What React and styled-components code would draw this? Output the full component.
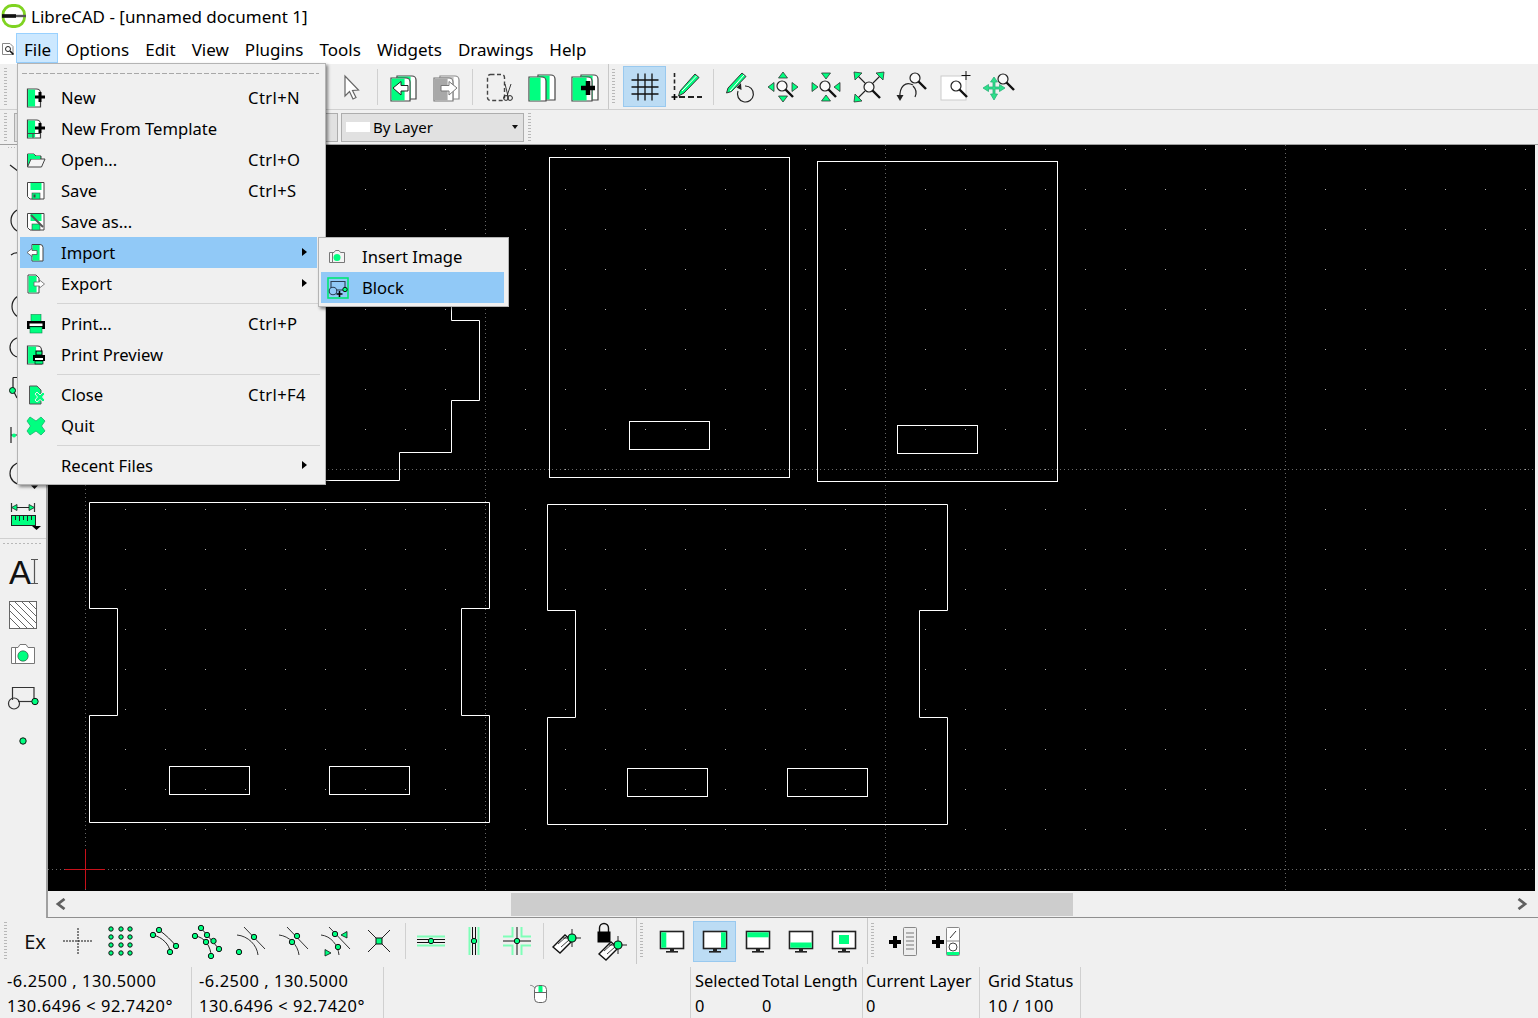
import React from "react";
import styled, { createGlobalStyle } from "styled-components";

const G = "#00ff80";
const K = "#111";
const FONT = `"Noto Sans", "Open Sans", sans-serif`;

const Global = createGlobalStyle`
  html, body { margin: 0; padding: 0; background: #f0f0f0; }
  body { font-family: ${FONT}; color: #000; }
`;

const Window = styled.div`
  position: relative;
  width: 1538px;
  height: 1018px;
  overflow: hidden;
  display: flex;
  flex-direction: column;
  background: #f0f0f0;
`;

const TitleBar = styled.div`
  height: 32px;
  display: flex;
  align-items: center;
  background: #fff;
  font-size: 17px;
`;

const TitleText = styled.span`
  margin-left: 4px;
`;

const MenuBar = styled.div`
  height: 32px;
  display: flex;
  align-items: center;
  background: #fff;
  font-size: 17px;
`;

const SysIcon = styled.svg`
  width: 14px;
  height: 14px;
  margin: 2px 1px 0 1px;
  flex: none;
`;

const MenuTitle = styled.div`
  height: 28px;
  padding: 0 ${(p) => (p.$open ? 7 : 8)}px;
  width: ${(p) => (p.$open ? "26px" : "auto")};
  line-height: 32px;
  border: 1px solid ${(p) => (p.$open ? "#99d1ff" : "transparent")};
  background: ${(p) => (p.$open ? "#cce8ff" : "transparent")};
  margin-left: ${(p) => (p.$open ? "0" : "-1px")};
  margin-right: ${(p) => (p.$open ? "0" : "-1px")};
`;

const Toolbar = styled.div`
  height: ${(p) => p.$h}px;
  display: flex;
  align-items: center;
  border-bottom: 1px solid ${(p) => p.$line};
  flex: none;
`;

const Grip = styled.div`
  width: 3px;
  height: ${(p) => p.$h || 38}px;
  margin-left: ${(p) => p.$ml ?? 4}px;
  flex: none;
  background: repeating-linear-gradient(to bottom, #b8b8b8 0 1px, transparent 1px 3px);
`;

const Spacer = styled.div`
  width: ${(p) => p.$w}px;
  flex: none;
`;

const ToolBtn = styled.div`
  width: 43px;
  height: 41px;
  flex: none;
  box-sizing: border-box;
  display: flex;
  align-items: center;
  justify-content: center;
  border: 1px solid ${(p) => (p.$on ? "#99c9ef" : "transparent")};
  background: ${(p) => (p.$on ? "#bcdcf4" : "transparent")};
`;

const Ex = styled.span`
  font-size: 20px;
  color: #111;
`;

const Glyph = styled.svg`
  width: 32px;
  height: 32px;
  overflow: visible;
  flex: none;
`;

const SideGlyph = styled(Glyph)`
  width: 30px;
  height: 30px;
`;

const ToolSep = styled.div`
  width: 9px;
  height: 36px;
  flex: none;
  &::before {
    content: "";
    display: block;
    width: 1px;
    height: 100%;
    margin-left: 4px;
    background: #d0d0d0;
  }
`;

const BreakBox = styled.div`
  width: ${(p) => p.$w}px;
  height: 100%;
  flex: none;
  display: flex;
  align-items: center;
  gap: 3px;
  padding-left: 2px;
  box-sizing: border-box;
`;

const BreakLine = styled.div`
  width: 1px;
  height: 100%;
  background: #c8c8c8;
  flex: none;
`;

const ComboLeft = styled.div`
  width: 324px;
  height: 29px;
  margin-left: 7px;
  box-sizing: border-box;
  border: 1px solid #adadad;
  background: #e1e1e1;
  flex: none;
`;

const Combo = styled.div`
  width: 183px;
  height: 29px;
  margin-left: 3px;
  box-sizing: border-box;
  border: 1px solid #adadad;
  background: #e1e1e1;
  display: flex;
  align-items: center;
  padding-left: 4px;
  font-size: 15px;
  line-height: 31px;
  flex: none;
`;

const Swatch = styled.div`
  width: 24px;
  height: 10px;
  background: #fff;
  margin-right: 3px;
  flex: none;
`;

const ComboArrow = styled.div`
  margin-left: auto;
  margin-right: 5px;
  width: 0;
  height: 0;
  border-left: 3.5px solid transparent;
  border-right: 3.5px solid transparent;
  border-top: 4px solid #111;
`;

const Middle = styled.div`
  flex: 1;
  display: flex;
  min-height: 0;
`;

const SideBar = styled.div`
  width: 46px;
  flex: none;
  display: flex;
  flex-direction: column;
  align-items: center;
`;

const SideGrip = styled.div`
  width: 30px;
  height: 5px;
  flex: none;
  background: repeating-linear-gradient(to right, #b8b8b8 0 1px, transparent 1px 3px);
  background-position: 0 2px;
  background-size: 100% 1px;
  background-repeat: no-repeat;
`;

const SideBtn = styled.div`
  width: 46px;
  height: 43px;
  flex: none;
  display: flex;
  align-items: center;
  justify-content: center;
  margin-top: ${(p) => p.$up || 0}px;
`;

const SideBreak = styled.div`
  width: 46px;
  height: 12px;
  flex: none;
  border-top: 1px solid #d0d0d0;
  margin-top: 1px;
  box-sizing: border-box;
  &::after {
    content: "";
    display: block;
    height: 1px;
    margin: 4px 3px 0 3px;
    background: repeating-linear-gradient(to right, #b8b8b8 0 2px, transparent 2px 4px);
  }
`;

const Work = styled.div`
  flex: 1;
  display: flex;
  flex-direction: column;
  border-left: 2px solid #a0a0a0;
  border-bottom: 1px solid #8f8f8f;
  min-width: 0;
`;

const CanvasWrap = styled.div`
  height: 746px;
  padding-right: 3px;
  flex: none;
`;

const Canvas = styled.svg`
  display: block;
  width: 1487px;
  height: 746px;
  background: #000;
`;

const ScrollBar = styled.div`
  flex: 1;
  display: flex;
  align-items: center;
  padding-right: 4px;
`;

const ScrollArrow = styled.svg`
  width: 26px;
  height: 12px;
  flex: none;
`;

const ScrollTrack = styled.div`
  flex: 1;
  height: 23px;
`;

const ScrollThumb = styled.div`
  width: 562px;
  height: 23px;
  margin-left: 437px;
  background: #cdcdcd;
`;

const StatusBar = styled.div`
  height: 53px;
  flex: none;
  display: flex;
  align-items: stretch;
  font-size: 16.4px;
`;

const Cell = styled.div`
  width: ${(p) => p.$w}px;
  margin-top: 2px;
  box-sizing: border-box;
  padding-left: ${(p) => p.$pl}px;
  border-right: 1px solid #d0d0d0;
  flex: none;
  display: flex;
  justify-content: ${(p) => (p.$center ? "center" : "flex-start")};
  align-items: ${(p) => (p.$center ? "center" : "stretch")};
`;

const Lines = styled.div`
  width: ${(p) => (p.$w ? p.$w + "px" : "auto")};
  flex: none;
  line-height: 25px;
  padding-top: 1px;
  white-space: nowrap;
`;

const Value = styled.span`
  letter-spacing: 0.55px;
`;

const MouseIcon = styled.svg`
  width: 20px;
  height: 22px;
  margin-left: 6px;
`;

const Menu = styled.div`
  position: absolute;
  left: ${(p) => p.$x}px;
  top: ${(p) => p.$y}px;
  width: ${(p) => p.$w}px;
  height: ${(p) => p.$h}px;
  box-sizing: border-box;
  background: #f0f0f0;
  border: 1px solid #b4b4b4;
  padding-left: 2px;
  box-shadow: 2px 2px 3px rgba(0, 0, 0, 0.45);
  font-size: 16.6px;
`;

const TearOff = styled.div`
  height: 18px;
  box-sizing: border-box;
  padding: 9px 6px 0 2px;
  &::before {
    content: "";
    display: block;
    height: 1px;
    background: repeating-linear-gradient(to right, #a8a8a8 0 5px, transparent 5px 7px);
  }
`;

const Item = styled.div`
  width: ${(p) => p.$w}px;
  height: 31px;
  display: grid;
  grid-template-columns: 41px ${(p) => (p.$sub ? "1fr" : "187px 1fr 20px")};
  align-items: center;
  background: ${(p) => (p.$hot ? "#91c9f7" : "transparent")};
  white-space: nowrap;
`;

const ItemIcon = styled.svg`
  width: 20px;
  height: 22px;
  margin-left: 6px;
  overflow: visible;
`;

const Keys = styled.span`
  letter-spacing: 0.4px;
`;

const Arrow = styled.div`
  width: 0;
  height: 0;
  margin: -2px 0 0 5px;
  border-top: 4.5px solid transparent;
  border-bottom: 4.5px solid transparent;
  border-left: 5px solid #000;
`;

const MenuSep = styled.div`
  height: 9px;
  width: 263px;
  margin-left: 37px;
  box-sizing: border-box;
  &::before {
    content: "";
    display: block;
    height: 1px;
    position: relative;
    top: 4px;
    background: #d4d4d4;
  }
`;

const SubPad = styled.div`
  height: 3px;
`;

/* ---------- icon drawings ---------- */

const Dot = ({ x, y, r = 2.7 }) => <circle cx={x} cy={y} r={r} fill={G} stroke={K} strokeWidth="1" />;

const Lens = ({ x, y, r = 5, c = "#222" }) => (
  <g>
    <circle cx={x} cy={y} r={r} fill="#fff" fillOpacity="0.6" stroke={c} strokeWidth="1.2" />
    <path d={`M${x + r * 0.7} ${y + r * 0.7} L${x + r + 6} ${y + r + 6}`} stroke="#111" strokeWidth="2.4" />
  </g>
);

const Tri = ({ p }) => <polygon points={p} fill={G} stroke="#333" strokeWidth="0.8" />;

const Doc = ({ x, y, w = 14, h = 26, fill = G, s = "#444", rest = "#fff" }) => (
  <g>
    <path d={`M${x} ${y + 1}h${w - 4}a4 4 0 0 1 4 4v${h - 5}h-${w}z`} fill={rest} stroke={s} strokeWidth="1.2" />
    <path d={`M${x + 0.6} ${y + 1.6}h${w - 6}v${h - 2.2}h-${w - 6}z`} fill={fill} />
  </g>
);

const Plus = ({ x, y, a = 5, t = 3 }) => (
  <path d={`M${x - t / 2} ${y - a}h${t}v${a - t / 2}h${a - t / 2}v${t}h-${a - t / 2}v${a - t / 2}h-${t}v-${a - t / 2}h-${a - t / 2}v-${t}h${a - t / 2}z`} fill="#000" />
);

const Monitor = ({ children }) => (
  <g>
    <rect x="4.5" y="6.5" width="23" height="17" fill="#fff" stroke="#222" strokeWidth="1.6" />
    {children}
    <rect x="14" y="24" width="4" height="2" fill="#222" />
    <rect x="10" y="26" width="12" height="1.6" fill="#222" />
  </g>
);

const Hand = ({ dx = 0, dy = 0 }) => (
  <g transform={`translate(${dx} ${dy})`}>
    <path d="M1 22 L13 10 L20 16 L8 28 Z" fill="#fff" stroke="#111" strokeWidth="1.4" />
    <path d="M6 19 L14 12 M9 22 L17 15" stroke="#111" strokeWidth="0.8" />
    <path d="M20 4 V22 M11 13 H29" stroke="#222" strokeWidth="1" />
    <circle cx="20" cy="13" r="4" fill={G} stroke="#111" strokeWidth="1.2" />
  </g>
);

const tools = {
  cursor: <path d="M9 5 L9 25 L13.5 20.5 L17 28 L20 26.5 L16.5 19.5 L22.5 19 Z" fill="#fff" stroke="#666" strokeWidth="1.2" />,
  tabLeft: (
    <g>
      <Doc x={9} y={4} w={19} h={24} />
      <Doc x={3} y={6} w={19} h={24} />
      <path d="M5 17 L13 10.5 V14.5 H20 V20 H13 V24 Z" fill="#fff" stroke="#222" strokeWidth="1" />
    </g>
  ),
  tabRight: (
    <g>
      <Doc x={9} y={4} w={19} h={24} fill="#c4c4c4" s="#888" />
      <Doc x={3} y={6} w={19} h={24} fill="#a8a8a8" s="#777" />
      <path d="M26 17 L18 10.5 V14.5 H10 V20 H18 V24 Z" fill="#fff" stroke="#777" strokeWidth="1" />
    </g>
  ),
  cut: (
    <g>
      <rect x="4.5" y="3.5" width="17" height="26" rx="3" fill="none" stroke="#444" strokeWidth="1.4" strokeDasharray="4 2.5" />
      <path d="M22 13 L25 25 M28 13 L24 25" stroke="#222" strokeWidth="0.9" />
      <circle cx="23" cy="27" r="2.4" fill="none" stroke="#222" />
      <circle cx="27" cy="27" r="2.4" fill="none" stroke="#222" />
    </g>
  ),
  twoDocs: (
    <g>
      <Doc x={12} y={3} w={17} h={26} />
      <Doc x={3} y={5} w={17} h={25} />
    </g>
  ),
  docsPlus: (
    <g>
      <Doc x={12} y={3} w={17} h={26} />
      <Doc x={3} y={5} w={20} h={25} />
      <Plus x={19} y={17} a={7} t={4.5} />
    </g>
  ),
  grid: <path d="M9 2.5V29.5M16 2.5V29.5M23 2.5V29.5M2.5 9H29.5M2.5 16H29.5M2.5 23H29.5" stroke="#111" strokeWidth="1.3" />,
  snapEdit: (
    <g>
      <path d="M2.5 2 V21" stroke="#222" strokeWidth="1.6" strokeDasharray="4 2.5" />
      <path d="M7 26 H30" stroke="#222" strokeWidth="1.8" strokeDasharray="6 3" />
      <Plus x={2.5} y={26} a={3} t={1.6} />
      <path d="M8 20 L23 3 L27 6.5 L12 22 L6.5 25 Z" fill={G} stroke="#333" strokeWidth="1" />
      <path d="M10 20 L24.5 5" stroke="#fff" strokeWidth="1" />
    </g>
  ),
  redraw: (
    <g>
      <path d="M2.5 22 L4 17 L18 2 L22 5.5 L7.5 20.5 Z" fill={G} stroke="#333" strokeWidth="1" />
      <path d="M6 20 L20 4" stroke="#fff" strokeWidth="1" />
      <path d="M21 15 A8 8 0 1 1 14 20" fill="none" stroke="#222" strokeWidth="1.2" />
      <path d="M17 12 L12.5 16.5 L17.5 19 Z" fill="#222" />
    </g>
  ),
  zoomIn: (
    <g>
      <Lens x={15} y={15} r={5} />
      <Tri p="16,1 11.5,7 20.5,7" />
      <Tri p="16,31 11.5,25 20.5,25" />
      <Tri p="1,16 7,11.5 7,20.5" />
      <Tri p="31,16 25,11.5 25,20.5" />
    </g>
  ),
  zoomOut: (
    <g>
      <Lens x={15} y={15} r={5} />
      <Tri p="16,8 11.5,2 20.5,2" />
      <Tri p="16,24 11.5,30 20.5,30" />
      <Tri p="8,16 2,11.5 2,20.5" />
      <Tri p="24,16 30,11.5 30,20.5" />
    </g>
  ),
  zoomAuto: (
    <g>
      <path d="M4 4 L12 12 M28 4 L20 12 M4 28 L12 20" stroke="#222" strokeWidth="1.1" />
      <Tri p="1,1 9,2 2,9" />
      <Tri p="31,1 23,2 30,9" />
      <Tri p="1,31 9,30 2,23" />
      <Lens x={16} y={16} r={5} />
    </g>
  ),
  zoomPrev: (
    <g>
      <path d="M17 14 C10 10 3 15 4 27" fill="none" stroke="#222" strokeWidth="1.2" />
      <path d="M0.5 24 L7.5 24 L4 30 Z" fill="#222" />
      <Lens x={19} y={7} r={5} />
      <path d="M19 26 C21 22 20 18 17 15" fill="none" stroke="#222" strokeWidth="1.2" />
    </g>
  ),
  zoomWin: (
    <g>
      <rect x="2" y="5" width="25" height="24" fill="#fff" stroke="#ccc" />
      <path d="M27 0 V9 M22.5 4.5 H31.5" stroke="#111" strokeWidth="1" />
      <Lens x={17} y={15} r={5} />
    </g>
  ),
  zoomPan: (
    <g>
      <path d="M12 6 L8.5 11 H11 V16 H6.5 V13.5 L1 17 L6.5 20.5 V18 H11 V23 H8.5 L12 29 L15.5 23 H13 V18 H17.5 V20.5 L23 17 L17.5 13.5 V16 H13 V11 H15.5 Z" fill="#2de08a" stroke="#2ab07a" strokeWidth="0.8" />
      <Lens x={21} y={8} r={5} />
    </g>
  ),
  free: <path d="M1 16H31M16 3V29" stroke="#111" strokeWidth="1" strokeDasharray="2 1" />,
  snapGrid: (
    <g>
      {[6, 16, 25].map((x) =>
        [4, 12, 20, 28].map((y) => <Dot key={x + "-" + y} x={x} y={y} r={2.2} />)
      )}
    </g>
  ),
  snapEnd: (
    <g>
      <path d="M11 5 C18 10 24 16 28 21 M5 10 C14 12 22 20 22 27" fill="none" stroke="#222" strokeWidth="1" />
      <Dot x={11} y={5} />
      <Dot x={5} y={10} />
      <Dot x={28} y={21} />
      <Dot x={22} y={27} />
    </g>
  ),
  snapEntity: (
    <g>
      <path d="M10 3 L28 24 M4 11 C14 12 20 22 20 31" fill="none" stroke="#222" strokeWidth="1" />
      <Dot x={10} y={3} />
      <Dot x={16} y={10} />
      <Dot x={4} y={11} />
      <Dot x={22.5} y={16} />
      <Dot x={15} y={17} />
      <Dot x={28} y={24} />
      <Dot x={20} y={31} />
    </g>
  ),
  snapCenter: (
    <g>
      <path d="M10 2 L31 24 M3 10 C14 11 23 20 24 30" fill="none" stroke="#333" strokeWidth="1" />
      <Dot x={20} y={12} />
      <Dot x={5} y={27} />
    </g>
  ),
  snapMiddle: (
    <g>
      <path d="M10 2 L31 24 M2 10 C12 11 21 20 22 30" fill="none" stroke="#333" strokeWidth="1" />
      <Dot x={20} y={11} />
      <Dot x={15} y={17} />
    </g>
  ),
  snapDist: (
    <g>
      <path d="M9 2 L30 24 M1 10 C11 11 18 20 19 30" fill="none" stroke="#333" strokeWidth="1" />
      <Dot x={15} y={9} />
      <Dot x={18} y={22} />
      <polygon points="21,10 27,6.5 27,13" fill={G} stroke={K} strokeWidth="0.8" />
      <polygon points="11,28 5,24.5 5,31" fill={G} stroke={K} strokeWidth="0.8" />
    </g>
  ),
  snapCross: (
    <g>
      <path d="M5 5 L27 27 M27 5 L5 27" stroke="#222" strokeWidth="1" />
      <rect x="13" y="13" width="6" height="6" fill={G} stroke={K} />
    </g>
  ),
  restrictH: (
    <g>
      <path d="M2 11.5H30M2 20.5H30" stroke="#7fffb8" strokeWidth="2" />
      <path d="M2 14.5H30M2 17.5H30" stroke="#111" strokeWidth="1" />
      <Dot x={16} y={16} />
    </g>
  ),
  restrictV: (
    <g>
      <path d="M11.5 2V30M20.5 2V30" stroke="#7fffb8" strokeWidth="2" />
      <path d="M14.5 2V30M17.5 2V30" stroke="#111" strokeWidth="1" />
      <Dot x={16} y={16} />
    </g>
  ),
  restrictO: (
    <g>
      <path d="M2 11.5H11.5V2M20.5 2V11.5H30M30 20.5H20.5V30M11.5 30V20.5H2" fill="none" stroke="#7fffb8" strokeWidth="2" />
      <path d="M2 16H30M16 2V30" stroke="#111" strokeWidth="1" />
      <Dot x={16} y={16} />
    </g>
  ),
  relZero: <Hand dx={-1} dy={0} />,
  relLock: (
    <g>
      <path d="M3.5 7 V3 A4.5 4.5 0 0 1 12.5 3 V7" fill="none" stroke="#111" strokeWidth="1.4" />
      <rect x="1.5" y="6.5" width="13" height="11" fill="#000" />
      <Hand dx={2} dy={7} />
    </g>
  ),
  monLeft: (
    <Monitor>
      <rect x="5.3" y="7.3" width="5" height="15.4" fill={G} />
    </Monitor>
  ),
  monRight: (
    <Monitor>
      <rect x="22" y="7.3" width="4.7" height="15.4" fill={G} />
    </Monitor>
  ),
  monTop: (
    <Monitor>
      <rect x="5.3" y="7.3" width="21.4" height="5" fill={G} />
    </Monitor>
  ),
  monBottom: (
    <Monitor>
      <rect x="5.3" y="17.5" width="21.4" height="5.2" fill={G} />
    </Monitor>
  ),
  monCenter: (
    <Monitor>
      <rect x="11" y="10" width="10" height="9" fill={G} />
    </Monitor>
  ),
  addList: (
    <g>
      <Plus x={8} y={17} a={6} t={4} />
      <rect x="16.5" y="2.5" width="13" height="28" rx="1" fill="#eee" stroke="#888" />
      <path d="M19 8H27M19 12H27M19 16H27M19 20H27M19 24H27" stroke="#777" strokeWidth="1" />
    </g>
  ),
  addBlock: (
    <g>
      <Plus x={8} y={17} a={6} t={4} />
      <rect x="16.5" y="2.5" width="13" height="28" rx="1" fill="#fff" stroke="#888" />
      <path d="M16.5 16H29.5" stroke="#888" />
      <path d="M20 13 L26 6" stroke="#333" />
      <rect x="17" y="27" width="12" height="3" fill={G} />
      <circle cx="23" cy="22" r="4" fill="none" stroke="#444" />
    </g>
  ),
};

// left column, only the bit sticking out from under the open menu shows for most of these
const side = {
  line: <path d="M2 8 L28 28" stroke="#222" strokeWidth="1.2" />,
  circle: <circle cx="15" cy="20.5" r="12" fill="none" stroke="#222" strokeWidth="1.2" />,
  arc: <path d="M3 12 C6 9 9 9 14 10" fill="none" stroke="#222" strokeWidth="1.2" />,
  ellipse: <circle cx="16" cy="20.5" r="12" fill="none" stroke="#222" strokeWidth="1.2" />,
  spline: <circle cx="12" cy="18.5" r="10" fill="none" stroke="#222" strokeWidth="1.2" />,
  poly: (
    <g>
      <path d="M5 5.5 H14 M5 5.5 V18 M5 18 L9 26" fill="none" stroke="#222" strokeWidth="1.2" />
      <Dot x={4.5} y={18.5} r={3} />
    </g>
  ),
  select: (
    <g>
      <path d="M3 12 V28 M3 20 H10" stroke="#222" strokeWidth="1.2" />
      <circle cx="6" cy="20.5" r="2" fill={G} />
    </g>
  ),
  modify: (
    <g>
      <circle cx="13" cy="15.5" r="11" fill="none" stroke="#222" strokeWidth="1.2" />
      <path d="M23 27.5 H30 L26.5 31 Z" fill="#111" />
    </g>
  ),
  dim: (
    <g>
      <path d="M3.5 2 V11 M26.5 2 V11" stroke="#333" strokeWidth="1.2" />
      <path d="M9 6.5 H21" stroke="#222" strokeWidth="1" />
      <path d="M3.5 6.5 L9 3.5 V9.5 Z M26.5 6.5 L21 3.5 V9.5 Z" fill={G} stroke="#222" strokeWidth="0.8" />
      <rect x="3.5" y="14.5" width="24" height="10" fill={G} stroke="#222" />
      <path d="M7.5 15V19M11.5 15V20M15.5 15V19M19.5 15V20M23.5 15V19" stroke="#222" />
      <path d="M24 25 H33 L28.5 29 Z" fill="#000" />
    </g>
  ),
  text: (
    <g>
      <text x="1" y="27" fontFamily={`"Liberation Sans", sans-serif`} fontSize="33" fill="#111">A</text>
      <path d="M23 2.5H30M26.5 2.5V26.5M23 26.5H30" stroke="#555" strokeWidth="1.2" fill="none" />
    </g>
  ),
  hatch: (
    <g>
      <defs>
        <clipPath id="hatchClip">
          <rect x="2" y="2" width="26" height="26" />
        </clipPath>
      </defs>
      <rect x="1.5" y="1.5" width="27" height="27" fill="#fff" stroke="#666" />
      <path clipPath="url(#hatchClip)" d="M-14 2L14 30M-7 2L21 30M0 2L28 30M7 2L35 30M14 2L42 30M21 2L49 30" stroke="#555" strokeWidth="0.9" />
    </g>
  ),
  image: (
    <g>
      <path d="M3.5 7.5 H10 L12 4.5 H18 L20 7.5 H26.5 V23.5 H3.5 Z" fill="#fff" stroke="#777" />
      <path d="M7.5 8V23" stroke="#777" />
      <circle cx="15" cy="16" r="5.2" fill={G} stroke="#333" strokeWidth="0.6" />
    </g>
  ),
  block: (
    <g>
      <path d="M4.5 17 V4.5 H26 V18" fill="none" stroke="#333" strokeWidth="1.2" />
      <path d="M10 18.5 H27" stroke="#333" strokeWidth="1.2" />
      <circle cx="6" cy="20.5" r="5.5" fill="none" stroke="#333" strokeWidth="1.2" />
      <Dot x={27} y={18.5} r={3.2} />
    </g>
  ),
  dot: <Dot x={15} y={15} r={3.2} />,
};

const menuIcons = {
  new: (
    <g>
      <Doc x={1.5} y={1} w={13} h={19} />
      <Plus x={14} y={10} a={5} t={3} />
    </g>
  ),
  template: (
    <g>
      <Doc x={1.5} y={1} w={13} h={19} />
      <path d="M1.5 15.5H14M7 15.5V20" stroke="#444" strokeWidth="1" />
      <Plus x={14} y={10} a={5} t={3} />
    </g>
  ),
  open: (
    <g>
      <path d="M1.5 18 V5 H8 L10 7 H15 V10" fill={G} stroke="#444" />
      <path d="M1.5 18 L5 10 H19 L15.5 18 Z" fill="#f4f4f4" stroke="#444" />
      <path d="M2 10 H14 V7 H9 L8 5 H2 Z" fill={G} />
    </g>
  ),
  save: (
    <g>
      <path d="M1.5 2.5 H18 V19 H4 L1.5 16.5 Z" fill="#fff" stroke="#444" />
      <rect x="4.5" y="3" width="11" height="7" fill={G} />
      <rect x="6" y="13" width="8" height="6" fill={G} stroke="#444" strokeWidth="0.6" />
      <rect x="7.5" y="14.5" width="2" height="3" fill="#444" />
    </g>
  ),
  saveAs: (
    <g>
      <path d="M1.5 2.5 H18 V19 H4 L1.5 16.5 Z" fill="#fff" stroke="#444" />
      <rect x="4.5" y="3" width="11" height="7" fill={G} />
      <rect x="6" y="13" width="8" height="6" fill={G} stroke="#444" strokeWidth="0.6" />
      <path d="M5 4 L17 16" stroke="#555" strokeWidth="2" />
    </g>
  ),
  import: (
    <g>
      <path d="M6 2.5 H14 A3 3 0 0 1 17 5.5 V19 H6 Z" fill="#fff" stroke="#444" />
      <rect x="6.6" y="3" width="7" height="15.6" fill={G} />
      <path d="M1 10.5 L6 6.5 V8.5 H11 V12.5 H6 V14.5 Z" fill="#fff" stroke="#555" strokeWidth="0.8" />
    </g>
  ),
  export: (
    <g>
      <path d="M2 2 H10 L13 5 V20 H2 Z" fill="#fff" stroke="#444" />
      <rect x="2.6" y="3" width="8" height="16.4" fill={G} />
      <path d="M18.5 11 L13.5 7 V9 H8 V13 H13.5 V15 Z" fill="#fff" stroke="#666" strokeWidth="0.8" />
    </g>
  ),
  print: (
    <g>
      <rect x="5" y="1.5" width="10" height="7" fill={G} stroke="#0a8a4e" strokeWidth="0.6" />
      <path d="M1 8 H19 V16 H1 Z" fill="#000" />
      <rect x="3.5" y="10.5" width="13" height="2.5" fill="#fff" />
      <rect x="4" y="14" width="12" height="6" fill={G} stroke="#0a8a4e" strokeWidth="0.6" />
    </g>
  ),
  preview: (
    <g>
      <Doc x={1.5} y={1} w={14} h={19} />
      <rect x="10" y="7" width="6" height="4" fill={G} stroke="#000" />
      <rect x="7" y="11" width="12" height="6" fill="#000" />
      <rect x="9" y="14" width="8" height="2" fill="#fff" />
      <rect x="9" y="17" width="8" height="3" fill={G} stroke="#000" strokeWidth="0.6" />
    </g>
  ),
  close: (
    <g>
      <path d="M3.5 2 H11 L15 6 V20 H3.5 Z" fill={G} stroke="#555" />
      <path d="M11 8 L14 11 L17 8 L19 10 L16.5 13 L19 16 L17 18 L14 15.5 L11 18 L9 16 L11.5 13 L9 10 Z" fill={G} stroke="#f0f0f0" strokeWidth="1" />
    </g>
  ),
  quit: <path d="M4 2 L10 6 L15 2 L19 6 L15.5 11 L19 16 L15 20 L10 16 L4 20 L1 16 L4.5 11 L1 6 Z" fill={G} stroke="#13b56b" strokeWidth="0.8" />,
  image: (
    <g>
      <path d="M2.5 6.5 H7 L8.5 4.5 H12 L13.5 6.5 H17.5 V16.5 H2.5 Z" fill="#f4f4f4" stroke="#777" />
      <path d="M5.5 7V16" stroke="#777" />
      <circle cx="10" cy="11.5" r="3.5" fill={G} />
    </g>
  ),
  block: (
    <g>
      <rect x="1" y="1" width="20" height="20" fill="none" stroke="#00e676" strokeWidth="1.6" />
      <path d="M4 11 V4.5 H18 V12" fill="none" stroke="#2c3e55" strokeWidth="1.1" />
      <path d="M9 13 H18" stroke="#2c3e55" strokeWidth="1.1" />
      <circle cx="6" cy="14" r="3.8" fill="none" stroke="#2c3e55" strokeWidth="1.1" />
      <Dot x={18} y={12.5} r={2.2} />
      <Plus x={12.5} y={17} a={3} t={1.6} />
    </g>
  ),
};

const Tool = ({ name, on }) => (
  <ToolBtn $on={on}>
    <Glyph viewBox="0 0 32 32">{tools[name]}</Glyph>
  </ToolBtn>
);

const Side = ({ name, up }) => (
  <SideBtn $up={up}>
    <SideGlyph viewBox="0 0 30 30">{side[name]}</SideGlyph>
  </SideBtn>
);

const Break = ({ w }) => (
  <BreakBox $w={w}>
    <BreakLine />
    <Grip $ml={0} $h={36} />
  </BreakBox>
);

const MenuItem = ({ icon, label, keys, more, hot, sub, w = 297 }) => (
  <Item $hot={hot} $sub={sub} $w={w}>
    {icon ? <ItemIcon viewBox="0 0 20 22">{menuIcons[icon]}</ItemIcon> : <span />}
    <span>{label}</span>
    {!sub && <Keys>{keys}</Keys>}
    {!sub && (more ? <Arrow /> : <span />)}
  </Item>
);

function Drawing() {
  const outline = (x, y, notch) =>
    `M${x} ${y}H${x + 400}V${y + 106}H${x + 372}V${y + notch}H${x + 400}V${y + 320}H${x}V${y + notch}H${x + 28}V${y + 106}H${x}Z`;
  const rects = [
    [549.5, 157.5, 240, 320], [629.5, 421.5, 80, 28],
    [817.5, 161.5, 240, 320], [897.5, 425.5, 80, 28],
    [169.5, 766.5, 80, 28], [329.5, 766.5, 80, 28],
    [627.5, 768.5, 80, 28], [787.5, 768.5, 80, 28],
  ];
  return (
    <Canvas viewBox="48 145 1487 746">
      <defs>
        <pattern id="dots" x="5" y="29" width="40" height="40" patternUnits="userSpaceOnUse">
          <rect width="1" height="1" fill="#a8a8a8" />
        </pattern>
      </defs>
      <rect x="48" y="145" width="1487" height="746" fill="url(#dots)" />
      {[85, 485, 885, 1285].map((x) => (
        <path key={x} d={`M${x + 0.5} 145V891`} stroke="#666" strokeDasharray="1 3" />
      ))}
      {[469, 869].map((y) => (
        <path key={y} d={`M48 ${y + 0.5}H1535`} stroke="#666" strokeDasharray="1 3" />
      ))}
      <path d="M65 869.5H105M85.5 849V889" stroke="#c8101a" />
      <g fill="none" stroke="#fff">
        <path d={outline(89.5, 502.5, 213)} />
        <path d={outline(547.5, 504.5, 213)} />
        <path d="M320 480.5H399.5V452.5H451.5V400.5H479.5V320.5H451.5V290" />
        {rects.map(([x, y, w, h]) => (
          <rect key={x + "," + y} x={x} y={y} width={w} height={h} />
        ))}
      </g>
    </Canvas>
  );
}

export default function App() {
  const titles = ["Options", "Edit", "View", "Plugins", "Tools", "Widgets", "Drawings", "Help"];
  return (
    <Window>
      <Global />
      <TitleBar>
        <svg width="27" height="32" viewBox="0 0 27 32" style={{ flex: "none" }}>
          <rect x="3" y="5.5" width="21.5" height="21" rx="9" fill="none" stroke="#7fd321" strokeWidth="2.8" />
          <path d="M2 16H26" stroke="#555" strokeWidth="2.4" />
          <path d="M2 16H16" stroke="#111" strokeWidth="3.6" />
        </svg>
        <TitleText>LibreCAD - [unnamed document 1]</TitleText>
      </TitleBar>

      <MenuBar>
        <SysIcon viewBox="0 0 14 14">
          <path d="M1.5 1.5H9L12 4.5V12.5H1.5Z" fill="#fff" stroke="#888" />
          <circle cx="7" cy="7" r="2.5" fill="none" stroke="#222" />
          <path d="M9 9L12.5 12.5" stroke="#111" strokeWidth="1.6" />
        </SysIcon>
        <MenuTitle $open>File</MenuTitle>
        {titles.map((t) => (
          <MenuTitle key={t}>{t}</MenuTitle>
        ))}
      </MenuBar>

      <Toolbar $h={45} $line="#d0d0d0">
        <Grip />
        <Spacer $w={323} />
        <Tool name="cursor" />
        <ToolSep />
        <Tool name="tabLeft" />
        <Tool name="tabRight" />
        <ToolSep />
        <Tool name="cut" />
        <Tool name="twoDocs" />
        <Tool name="docsPlus" />
        <Break w={17} />
        <Tool name="grid" on />
        <Tool name="snapEdit" />
        <ToolSep />
        {["redraw", "zoomIn", "zoomOut", "zoomAuto", "zoomPrev", "zoomWin", "zoomPan"].map((n) => (
          <Tool key={n} name={n} />
        ))}
      </Toolbar>

      <Toolbar $h={34} $line="#a0a0a0">
        <Grip $h={28} />
        <ComboLeft />
        <Combo>
          <Swatch />
          By Layer
          <ComboArrow />
        </Combo>
        <Grip $h={28} $ml={4} />
      </Toolbar>

      <Middle>
        <SideBar>
          <SideGrip />
          {["line", "circle", "arc", "ellipse", "spline", "poly", "select", "modify", "dim"].map((n) => (
            <Side key={n} name={n} />
          ))}
          <SideBreak />
          <Side name="text" />
          <Side name="hatch" />
          <Side name="image" up={-3} />
          <Side name="block" />
          <Side name="dot" />
        </SideBar>
        <Work>
          <CanvasWrap>
            <Drawing />
          </CanvasWrap>
          <ScrollBar>
            <ScrollArrow viewBox="0 0 26 12">
              <path d="M16.5 1L10 6L16.5 11" fill="none" stroke="#606060" strokeWidth="2.8" />
            </ScrollArrow>
            <ScrollTrack>
              <ScrollThumb />
            </ScrollTrack>
            <ScrollArrow viewBox="0 0 26 12">
              <path d="M10.5 1L17 6L10.5 11" fill="none" stroke="#606060" strokeWidth="2.8" />
            </ScrollArrow>
          </ScrollBar>
        </Work>
      </Middle>

      <Toolbar $h={46} $line="transparent">
        <Grip />
        <Spacer $w={6.5} />
        <ToolBtn>
          <Ex>Ex</Ex>
        </ToolBtn>
        {["free", "snapGrid", "snapEnd", "snapEntity", "snapCenter", "snapMiddle", "snapDist", "snapCross"].map((n) => (
          <Tool key={n} name={n} />
        ))}
        <ToolSep />
        <Tool name="restrictH" />
        <Tool name="restrictV" />
        <Tool name="restrictO" />
        <ToolSep />
        <Tool name="relZero" />
        <Tool name="relLock" />
        <Break w={16.5} />
        <Tool name="monLeft" />
        <Tool name="monRight" on />
        <Tool name="monTop" />
        <Tool name="monBottom" />
        <Tool name="monCenter" />
        <Break w={16} />
        <Tool name="addList" />
        <Tool name="addBlock" />
      </Toolbar>

      <StatusBar>
        <Cell $w={192} $pl={7}>
          <Lines>
            <Value>-6.2500 , 130.5000</Value>
            <br />
            <Value>130.6496 &lt; 92.7420°</Value>
          </Lines>
        </Cell>
        <Cell $w={192} $pl={7}>
          <Lines>
            <Value>-6.2500 , 130.5000</Value>
            <br />
            <Value>130.6496 &lt; 92.7420°</Value>
          </Lines>
        </Cell>
        <Cell $w={307} $pl={0} $center>
          <MouseIcon viewBox="0 0 20 22">
            <path d="M-2 6C0 2 2 3 5 6" fill="none" stroke="#888" />
            <rect x="4.5" y="3.5" width="12" height="17" rx="4" fill="#fff" stroke="#666" />
            <rect x="8.5" y="4" width="4" height="6" fill={G} />
            <path d="M5 10.5H16" stroke="#666" />
          </MouseIcon>
        </Cell>
        <Cell $w={172} $pl={4}>
          <Lines $w={67}>
            Selected
            <br />0
          </Lines>
          <Lines>
            Total Length
            <br />0
          </Lines>
        </Cell>
        <Cell $w={117} $pl={3}>
          <Lines>
            Current Layer
            <br />0
          </Lines>
        </Cell>
        <Cell $w={101} $pl={8}>
          <Lines>
            Grid Status
            <br />
            <Value>10 / 100</Value>
          </Lines>
        </Cell>
      </StatusBar>

      <Menu $x={17} $y={63} $w={309} $h={422}>
        <TearOff />
        <MenuItem icon="new" label="New" keys="Ctrl+N" />
        <MenuItem icon="template" label="New From Template" />
        <MenuItem icon="open" label="Open..." keys="Ctrl+O" />
        <MenuItem icon="save" label="Save" keys="Ctrl+S" />
        <MenuItem icon="saveAs" label="Save as..." />
        <MenuItem icon="import" label="Import" more hot />
        <MenuItem icon="export" label="Export" more />
        <MenuSep />
        <MenuItem icon="print" label="Print..." keys="Ctrl+P" />
        <MenuItem icon="preview" label="Print Preview" />
        <MenuSep />
        <MenuItem icon="close" label="Close" keys="Ctrl+F4" />
        <MenuItem icon="quit" label="Quit" />
        <MenuSep />
        <MenuItem label="Recent Files" more />
      </Menu>

      <Menu $x={318} $y={237} $w={191} $h={70}>
        <SubPad />
        <MenuItem icon="image" label="Insert Image" sub w={183} />
        <MenuItem icon="block" label="Block" sub hot w={183} />
      </Menu>
    </Window>
  );
}
